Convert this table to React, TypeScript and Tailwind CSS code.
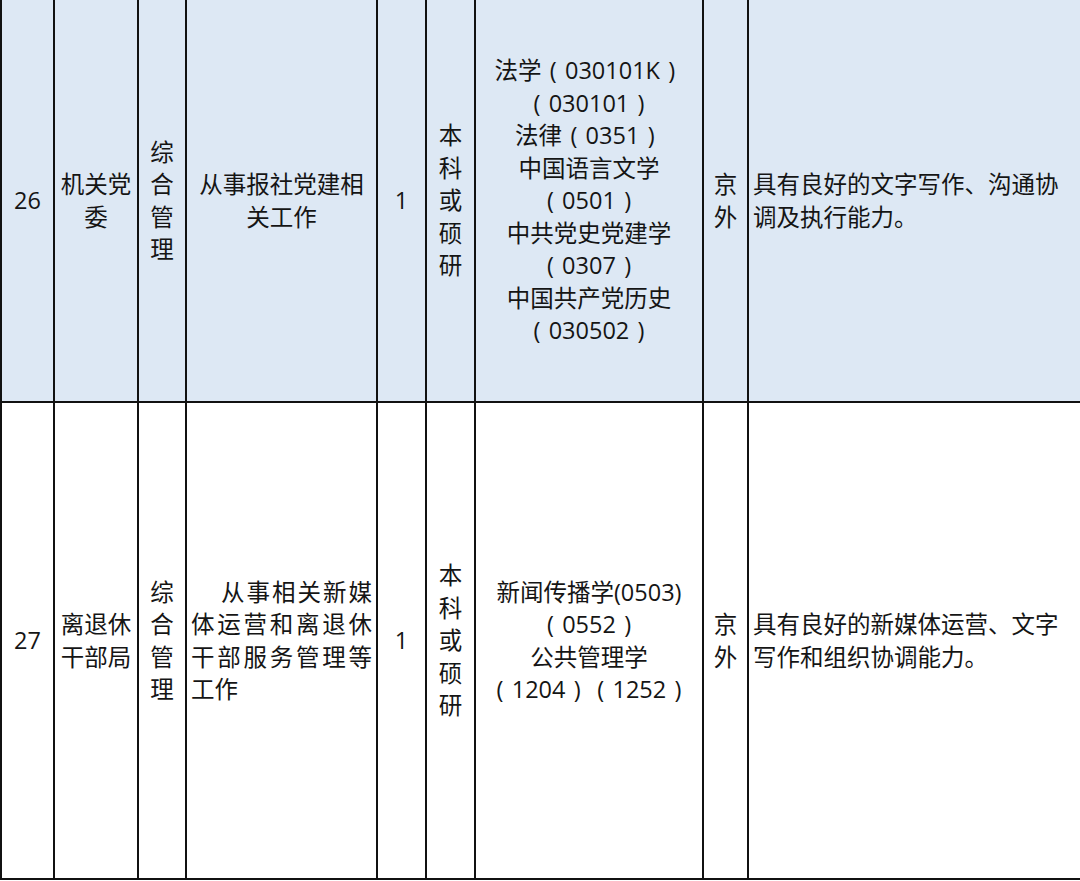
import React from 'react';

const font = { fontFamily: '"Open Sans", "Noto Sans CJK SC", sans-serif' };

interface CellProps {
    children?: React.ReactNode;
    className?: string;
}

const Cell: React.FC<CellProps> = ({ children, className = '' }) => (
    <div className={`border-r-2 border-b-2 border-[#111] flex items-center justify-center text-center ${className}`}>
        {children}
    </div>
);

const Stack: React.FC<{ chars: string }> = ({ chars }) => (
    <div className="flex flex-col items-center">
        {chars.split('').map((c, i) => (
            <span key={i}>{c}</span>
        ))}
    </div>
);

// full-width bracket with the glyph centred in its box
const L = () => <span className="inline-block w-[1em] text-center">(</span>;
const R = () => <span className="inline-block w-[1em] text-center">)</span>;

export default function App() {
    return (
        <div className="w-[1080px] h-[881px] bg-white overflow-hidden" style={font}>
            <div className="grid grid-cols-[53px_84px_48px_191px_49px_49px_228px_45px_333px] grid-rows-[403px_477px] border-l-2 border-[#111] text-[23.5px] leading-[32.5px] text-[#151515]">
                {/* row 26 */}
                <Cell className="bg-[#dde8f4]">26</Cell>
                <Cell className="bg-[#dde8f4] px-1">机关党委</Cell>
                <Cell className="bg-[#dde8f4]"><Stack chars="综合管理" /></Cell>
                <Cell className="bg-[#dde8f4] px-2">从事报社党建相关工作</Cell>
                <Cell className="bg-[#dde8f4]">1</Cell>
                <Cell className="bg-[#dde8f4]"><Stack chars="本科或硕研" /></Cell>
                <Cell className="bg-[#dde8f4]">
                    <div className="flex flex-col items-center">
                        <span>法学<L />030101K<R /></span>
                        <span><L />030101<R /></span>
                        <span>法律<L />0351<R /></span>
                        <span>中国语言文学</span>
                        <span><L />0501<R /></span>
                        <span>中共党史党建学</span>
                        <span><L />0307<R /></span>
                        <span>中国共产党历史</span>
                        <span><L />030502<R /></span>
                    </div>
                </Cell>
                <Cell className="bg-[#dde8f4]"><Stack chars="京外" /></Cell>
                <Cell className="bg-[#dde8f4] !justify-start !text-left pl-[4px] pr-[20px] border-r border-r-[#777]">
                    具有良好的文字写作、沟通协调及执行能力。
                </Cell>

                {/* row 27 */}
                <Cell>27</Cell>
                <Cell className="px-1">离退休干部局</Cell>
                <Cell><Stack chars="综合管理" /></Cell>
                <Cell className="!justify-start pl-[4px] pr-[4px]">
                    <p className="text-justify indent-[30px] w-full">从事相关新媒体运营和离退休干部服务管理等工作</p>
                </Cell>
                <Cell>1</Cell>
                <Cell><Stack chars="本科或硕研" /></Cell>
                <Cell>
                    <div className="flex flex-col items-center">
                        <span>新闻传播学(0503)</span>
                        <span><L />0552<R /></span>
                        <span>公共管理学</span>
                        <span><L />1204<R /><L />1252<R /></span>
                    </div>
                </Cell>
                <Cell><Stack chars="京外" /></Cell>
                <Cell className="!justify-start !text-left pl-[4px] pr-[20px] border-r border-r-[#777]">
                    具有良好的新媒体运营、文字写作和组织协调能力。
                </Cell>
            </div>
        </div>
    );
}
